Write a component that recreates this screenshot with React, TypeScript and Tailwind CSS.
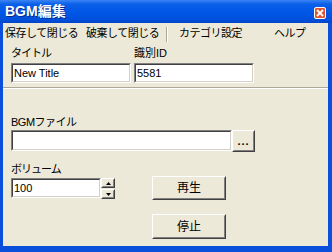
import type { ReactNode } from "react";

const FONT = "font-['Liberation_Sans','Noto_Sans_CJK_JP',sans-serif] [font-feature-settings:\"palt\"]";

function Sunken({ className, children }: { className: string; children?: ReactNode }) {
  return (
    <div
      className={`border border-t-[#808080] border-l-[#808080] border-r-white border-b-white ${className}`}
    >
      <div className="h-full border border-t-[#404040] border-l-[#404040] border-r-[#d4d0c8] border-b-[#d4d0c8] bg-white pl-[1px] text-[12px] leading-[16px] text-black">
        {children}
      </div>
    </div>
  );
}

function Raised({ className, children }: { className: string; children?: ReactNode }) {
  return (
    <div
      className={`border border-t-white border-l-white border-r-[#404040] border-b-[#404040] ${className}`}
    >
      <div className="flex h-full items-center justify-center border border-t-[#ece9d8] border-l-[#ece9d8] border-r-[#808080] border-b-[#808080] bg-[#ece9d8]">
        {children}
      </div>
    </div>
  );
}

export default function App() {
  return (
    <div className={`flex h-[252px] w-[332px] flex-col bg-[#0a4fdc] ${FONT}`}>
      {/* title bar */}
      <div className="flex h-[23px] shrink-0 items-start justify-between bg-[linear-gradient(to_bottom,#3b84f5_0%,#0a60e8_18%,#0056e6_55%,#0050dc_85%,#0045c8_100%)] pl-[5px] pr-[6px]">
        <span className="mt-[3px] text-[14px] font-bold leading-[16px] text-white [text-shadow:1px_1px_0_#0a2a8a]">
          BGM編集
        </span>
        <div className="mt-[7px] flex h-[12px] w-[12px] items-center justify-center rounded-[2px] border border-white bg-[#e2552f]">
          <svg width="8" height="8" viewBox="0 0 8 8">
            <path d="M1 1L7 7M7 1L1 7" stroke="white" strokeWidth="1.8" />
          </svg>
        </div>
      </div>

      <div className="mb-[6px] ml-[3px] mr-[4px] flex flex-1 flex-col bg-[#ece9d8] text-[11px] leading-[16px] text-black">
        {/* menu bar */}
        <div className="flex h-[20px] items-center pl-[2px] tracking-[-0.5px]">
          <span className="w-[81px]">保存して閉じる</span>
          <span className="w-[80px]">破棄して閉じる</span>
          <span className="mt-[3px] h-[15px] w-[2px] border-l border-r border-l-[#aca899] border-r-white" />
          <span className="ml-[11px] w-[95px]">カテゴリ設定</span>
          <span>ヘルプ</span>
        </div>

        {/* title / id */}
        <div className="flex gap-[3px] pl-[8px] pt-[2px]">
          <div className="flex w-[120px] flex-col">
            <span className="h-[18px] tracking-[-1px]">タイトル</span>
            <Sunken className="h-[20px]">
              <span className="text-[11px]">New Title</span>
            </Sunken>
          </div>
          <div className="flex w-[120px] flex-col">
            <span className="h-[18px]">識別ID</span>
            <Sunken className="h-[20px]">
              <span className="text-[11px]">5581</span>
            </Sunken>
          </div>
        </div>

        <div className="mt-[4px] h-[2px] border-t border-b border-t-[#aca899] border-b-white" />

        {/* file */}
        <div className="flex flex-col pl-[8px] pt-[25px]">
          <span className="h-[16px] tracking-[-0.5px]">BGMファイル</span>
          <div className="flex items-start">
            <Sunken className="h-[21px] w-[221px]" />
            <Raised className="h-[22px] w-[23px]">
              <span className="text-[11px] font-bold leading-[10px] tracking-[1px]">...</span>
            </Raised>
          </div>
        </div>

        {/* volume + buttons */}
        <div className="flex pl-[8px] pt-[9px]">
          <div className="flex w-[141px] flex-col">
            <span className="h-[17px] tracking-[-1px]">ボリューム</span>
            <div className="flex items-start">
              <Sunken className="h-[20px] w-[90px]">
                <span className="text-[11px]">100</span>
              </Sunken>
              <div className="flex flex-col gap-[1px]">
                <Raised className="h-[10px] w-[14px]">
                  <svg width="5" height="3" viewBox="0 0 5 3">
                    <path d="M2.5 0L5 3H0Z" fill="black" />
                  </svg>
                </Raised>
                <Raised className="h-[10px] w-[14px]">
                  <svg width="5" height="3" viewBox="0 0 5 3">
                    <path d="M0 0H5L2.5 3Z" fill="black" />
                  </svg>
                </Raised>
              </div>
            </div>
          </div>
          <div className="flex flex-col gap-[14px] pt-[15px] text-[12px]">
            <Raised className="h-[24px] w-[74px]">
              <span>再生</span>
            </Raised>
            <Raised className="h-[25px] w-[74px]">
              <span>停止</span>
            </Raised>
          </div>
        </div>
      </div>
    </div>
  );
}
